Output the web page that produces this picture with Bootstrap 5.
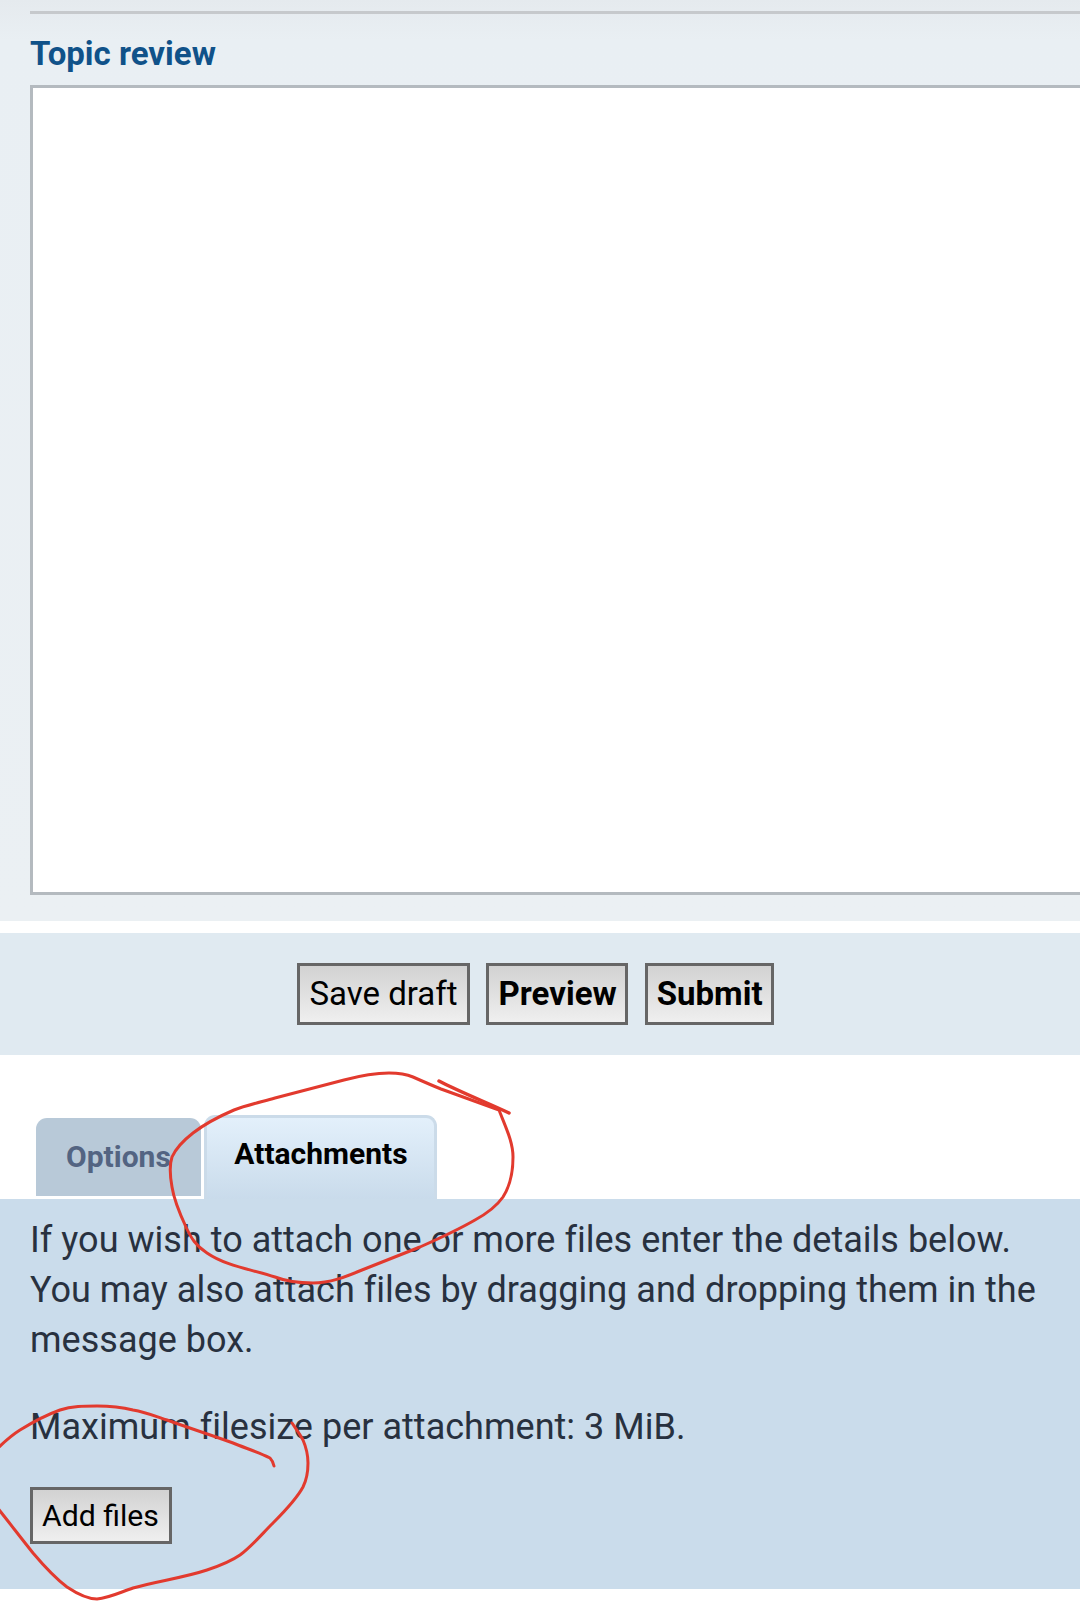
<!DOCTYPE html>
<html lang="en">
<head>
    <meta charset="UTF-8">
    <meta name="viewport" content="width=device-width, initial-scale=1.0">
    <title>Post a new topic</title>
    <link href="https://cdn.jsdelivr.net/npm/bootstrap@5.3.0/dist/css/bootstrap.min.css" rel="stylesheet">
    <style>
        html, body { height: 1606px; overflow: hidden; }
        body { font-family: Roboto, "Liberation Sans", sans-serif; color: #28313f; background: #fff; position: relative; }
        .review-panel { height: 921px; padding: 11px 0 0 30px; background: linear-gradient(#e5eaee, #e9eff3 40px, #ebf0f3); }
        .review-rule { height: 3px; background: #c6c9cc; }
        .review-title { margin: 18px 0 0; height: 53px; font-size: 33px; line-height: 43px; font-weight: 700; color: #105289; }
        .review-box { display: block; width: 1100px; height: 810px; border: 3px solid #b4babf; border-radius: 0; background: #fff; padding: 0; resize: none; }
        .submit-bar { height: 122px; margin-top: 12px; padding-right: 9px; background: #e0eaf1; }
        .old-btn { height: 62px; padding: 0 9px; border: 3px solid #666; border-radius: 0; background: linear-gradient(#d2d2d2, #efefef); color: #000; font-size: 33px; line-height: 56px; }
        .old-btn:hover { background: linear-gradient(#d2d2d2, #efefef); border-color: #666; color: #000; }
        .old-btn-preview { padding: 0 8px 0 10px; }
        .old-btn-submit { margin-left: 1px; padding: 0 8px 0 9px; }
        .old-btn-small { height: 57px; padding: 0 10px 0 9px; font-size: 30.2px; line-height: 51px; }
        .tab-strip { height: 144px; padding-left: 36px; gap: 3px; }
        .tab-item { font-size: 30px; font-weight: 700; border-radius: 11px 11px 0 0; text-align: center; }
        .tab-options { width: 165px; height: 78px; margin-bottom: 3px; padding-left: 30px; text-align: left; line-height: 78px; background: #b8c9d8; color: #536482; white-space: nowrap; }
        .tab-attach { width: 233px; height: 84px; padding-left: 1px; border: 3px solid #cbdbe9; border-bottom: 0; line-height: 72px; background: linear-gradient(#e3f0fb, #c9dbeb); color: #000; }
        .attach-panel { height: 390px; padding: 16px 30px 0; background: #cadceb; font-size: 36px; line-height: 50px; letter-spacing: .02px; }
        .attach-panel p { margin: 0 0 37px; }
        .attach-panel .limit-line { margin-bottom: 35px; }
        .scribble { position: absolute; left: 0; top: 0; pointer-events: none; }
    </style>
</head>
<body>
    <div class="review-panel">
        <div class="review-rule"></div>
        <h3 class="review-title">Topic review</h3>
        <textarea class="review-box form-control" aria-label="Topic review"></textarea>
    </div>

    <div class="submit-bar d-flex justify-content-center align-items-center gap-3">
        <button type="button" class="btn old-btn">Save draft</button>
        <button type="button" class="btn old-btn old-btn-preview fw-bold">Preview</button>
        <button type="button" class="btn old-btn old-btn-submit fw-bold">Submit</button>
    </div>

    <div class="tab-strip d-flex align-items-end">
        <div class="tab-item tab-options">Options</div>
        <div class="tab-item tab-attach">Attachments</div>
    </div>

    <div class="attach-panel">
        <p>If you wish to attach one or more files enter the details below. You may also attach files by dragging and dropping them in the message box.</p>
        <p class="limit-line">Maximum filesize per attachment: 3 MiB.</p>
        <button type="button" class="btn old-btn old-btn-small">Add files</button>
    </div>

    <svg class="scribble" width="1080" height="1606" viewBox="0 0 1080 1606" fill="none" stroke="#e23a2e" stroke-width="3" stroke-linecap="round" stroke-linejoin="round">
        <path d="M439 1081C460 1092 488 1103 509 1113" stroke-width="3.5"/>
        <path d="M499 1110C506 1128 513 1142 513 1157C513 1172 510 1186 503 1197C496 1207 486 1214 475 1220C456 1231 438 1239 420 1247C400 1255 382 1262 362 1270C345 1277 330 1283 313 1283C300 1283 288 1282 275 1277C250 1269 226 1266 207 1253C196 1246 191 1238 186 1227C179 1212 174 1200 172 1187C170 1176 169 1166 172 1157C176 1148 184 1140 193 1133C206 1123 220 1116 234 1110C247 1105 261 1102 275 1098C298 1092 321 1086 344 1080C359 1076 374 1073 389 1073C398 1073 406 1074 413 1077C422 1081 431 1085 441 1089C460 1096 480 1103 499 1110"/>
        <path d="M274 1466C273 1462 272 1460 270 1458C258 1452 245 1448 233 1443C211 1435 189 1428 167 1420C155 1416 145 1412 133 1410C121 1407 109 1406 97 1406C84 1406 72 1406 60 1410C46 1415 33 1422 20 1430C12 1435 4 1442 -4 1450"/>
        <path d="M-4 1506C8 1521 21 1538 33 1553C44 1566 55 1578 67 1587C76 1593 86 1599 97 1599C109 1598 121 1592 133 1588C157 1581 183 1578 207 1570C219 1566 230 1562 240 1555C252 1546 262 1534 273 1523C284 1512 296 1500 303 1487C307 1479 308 1471 308 1463C308 1455 306 1447 303 1440C300 1434 296 1429 292 1423"/>
    </svg>
</body>
</html>
